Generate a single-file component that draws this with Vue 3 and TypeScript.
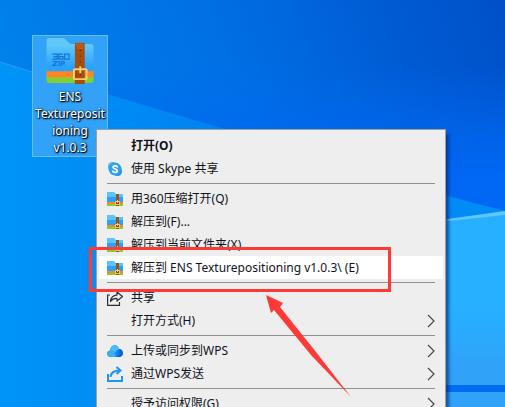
<script setup lang="ts">
type IconName = 'skype' | 'zip' | 'share' | 'cloud' | 'send'

interface MenuItem {
  label: string
  icon?: IconName
  primary?: boolean
  active?: boolean
  submenu?: boolean
}

const groups: MenuItem[][] = [
  [
    { label: '打开(O)', primary: true },
    { label: '使用 Skype 共享', icon: 'skype' },
  ],
  [
    { label: '用360压缩打开(Q)', icon: 'zip' },
    { label: '解压到(F)...', icon: 'zip' },
    { label: '解压到当前文件夹(X)', icon: 'zip' },
    { label: '解压到 ENS Texturepositioning v1.0.3\\ (E)', icon: 'zip', active: true },
  ],
  [
    { label: '共享', icon: 'share' },
    { label: '打开方式(H)', submenu: true },
  ],
  [
    { label: '上传或同步到WPS', icon: 'cloud', submenu: true },
    { label: '通过WPS发送', icon: 'send', submenu: true },
  ],
  [{ label: '授予访问权限(G)', submenu: true }],
]

const fileNameLines: string[] = ['ENS', 'Textureposit', 'ioning', 'v1.0.3']
</script>

<template>
  <main class="desktop">
    <svg class="wallpaper" viewBox="0 0 505 407" preserveAspectRatio="none" aria-hidden="true">
      <defs>
        <linearGradient id="sky" x1="0" y1="0.3" x2="1" y2="0">
          <stop offset="0" stop-color="#0083ec" />
          <stop offset="0.45" stop-color="#0070e4" />
          <stop offset="0.8" stop-color="#005ad2" />
          <stop offset="1" stop-color="#0050c8" />
        </linearGradient>
        <linearGradient id="deep" x1="0" y1="0" x2="0" y2="1">
          <stop offset="0.3" stop-color="#0068f4" stop-opacity="0" />
          <stop offset="0.8" stop-color="#0068f4" />
        </linearGradient>
        <linearGradient id="beam" x1="0" y1="0" x2="1" y2="0">
          <stop offset="0" stop-color="#0094f8" />
          <stop offset="1" stop-color="#0082f0" />
        </linearGradient>
        <linearGradient id="pane" x1="0" y1="0" x2="0" y2="1">
          <stop offset="0.5" stop-color="#26b0ff" />
          <stop offset="0.8" stop-color="#30a2f8" />
        </linearGradient>
      </defs>
      <rect width="505" height="407" fill="url(#sky)" />
      <rect width="505" height="220" fill="url(#deep)" />
      <path d="M0 62L110 95L228 130V407H0Z" fill="url(#beam)" />
      <path d="M0 62L32 72" stroke="#279fee" />
      <path d="M440 194L505 211V222H440Z" fill="#008bf6" />
      <path d="M440 220L505 212V407H440Z" fill="url(#pane)" />
      <path d="M440 220L505 211V215L440 222Z" fill="#60c6f8" />
      <rect x="440" y="385" width="65" height="7" fill="#006cf2" />
    </svg>

    <button class="file" type="button">
      <svg class="file-icon" viewBox="0 0 48 48" aria-hidden="true">
        <defs>
          <linearGradient id="folder" x1="0" y1="0" x2="0" y2="1">
            <stop offset="0.2" stop-color="#60c8fa" />
            <stop offset="0.8" stop-color="#28a2fc" />
          </linearGradient>
        </defs>
        <path d="M0 3Q0 0 3 0H17Q19 0 20 2L23 5Q24 6 26 6H45Q48 6 48 9V37H0Z" fill="url(#folder)" />
        <path d="M0 37H48V43Q48 46 45 46H3Q0 46 0 43Z" fill="#86ce30" />
        <path d="M0 32Q0 34 3 34H45Q48 34 48 32V37Q48 40 45 40H3Q0 40 0 37Z" fill="#ff8424" />
        <path d="M6 16.500H11V21.500H6M7 19H11M17 16.500H12.500V21.500H17V19H13M18.500 16.500H23V21.500H18.500Z" fill="none" stroke="#1474d8" stroke-width="1.200" />
        <path d="M6 24H11L6.500 28H11M13 23.500V28.500M15 28.500V24H18V26.500H15" fill="none" stroke="#1474d8" stroke-width="1.200" />
        <rect x="29" y="5" width="10" height="42" fill="#a84e0c" />
        <path d="M30 6.500H38M31 8.500H38M32 10.500H37" stroke="#ee8428" stroke-dasharray="1 1" />
        <path d="M34 12h1v1h-1zM34 18h1v1h-1zM34 24h1v1h-1zM34 37h1v1h-1z" fill="#321400" />
        <rect x="28" y="32" width="13" height="10" rx="1" fill="none" stroke="#ffce6c" stroke-width="2" />
        <path d="M34.500 29V36" stroke="#ffce6c" stroke-width="2" />
      </svg>
      <span class="file-name">
        <span v-for="line in fileNameLines" :key="line">{{ line }}</span>
      </span>
    </button>

    <div class="menu" role="menu">
      <div v-for="(group, index) in groups" :key="index" class="group" role="group">
        <button
          v-for="item in group"
          :key="item.label"
          type="button"
          role="menuitem"
          class="item"
          :class="{ primary: item.primary, active: item.active }"
        >
          <span class="slot">
            <svg v-if="item.icon === 'skype'" viewBox="0 0 16 16" aria-hidden="true">
              <circle cx="5.500" cy="5.500" r="4.500" fill="#48b8f4" />
              <circle cx="10.500" cy="10.500" r="4.500" fill="#1e90ec" />
              <circle cx="8" cy="8" r="6.500" fill="#2ca2f2" />
              <path d="M10.300 5.800C9.500 4.400 5.900 4.400 6 6.300C6.100 8.300 10.300 7.500 10.300 9.800C10.300 11.800 6.500 11.700 5.700 10.200" fill="none" stroke="#fff" stroke-width="1.700" stroke-linecap="round" />
            </svg>
            <svg v-else-if="item.icon === 'zip'" viewBox="0 0 16 16" aria-hidden="true">
              <path d="M0 1H7L9 3H16V12H0Z" fill="#5cc4fa" />
              <path d="M0 6H16V12H0Z" fill="#2aa2fa" />
              <path d="M0 13H16V15H0Z" fill="#86ce30" />
              <path d="M0 11H16V13H0Z" fill="#ff8424" />
              <path d="M9 3H12V15H9Z" fill="#a84e0c" />
              <path d="M8.500 10.500H12.500V13.500H8.500Z" fill="#8c3c08" stroke="#ffce6c" />
              <path d="M10.500 9V12" stroke="#ffce6c" />
            </svg>
            <svg v-else-if="item.icon === 'share'" viewBox="0 0 16 16" aria-hidden="true">
              <path d="M3 5H.600V15.400H12.500V12" fill="none" stroke="#2a2e38" stroke-width="1.200" />
              <path d="M10 2L15.500 6.500L10 11V8.500Q6 8 3.500 11.500Q4 5.500 10 4.800Z" fill="none" stroke="#2a2e38" stroke-width="1.200" stroke-linejoin="round" />
            </svg>
            <svg v-else-if="item.icon === 'cloud'" viewBox="0 0 16 16" aria-hidden="true">
              <path d="M4 14C-1 14-1 8 3 7.500C3.500 1 11 .500 12 6C17 6 17.500 14 12.500 14Z" fill="#1684ee" />
              <path d="M4 14C-1 14-1 8 3 7.500C6 7 8 9 9 14Z" fill="#38b0f4" />
              <path d="M3 7.500C3.500 1 11 .500 12 6Q9 7 8 10Q6 7 3 7.500Z" fill="#4cbcf6" />
              <path d="M12 6C17 6 17.500 14 12.500 14H9Q14 12 12 6Z" fill="#0866d2" />
            </svg>
            <svg v-else-if="item.icon === 'send'" viewBox="0 0 16 16" aria-hidden="true">
              <path d="M1 8V15H15V10" fill="none" stroke="#1e96f4" stroke-width="2" />
              <path d="M3.500 11Q4 4.500 13 4.500M9.500 1L13.500 4.500L9.500 8" fill="none" stroke="#1e96f4" stroke-width="2" />
            </svg>
          </span>
          <span class="label">{{ item.label }}</span>
          <svg v-if="item.submenu" class="chevron" viewBox="0 0 8 14" aria-hidden="true">
            <path d="M1 1L7 7L1 13" fill="none" stroke="#4a4644" stroke-width="1.200" />
          </svg>
        </button>
      </div>
    </div>

    <div class="highlight" aria-hidden="true"></div>
    <svg class="pointer" viewBox="0 0 85 103" aria-hidden="true">
      <path d="M0 0L17 8L14 12L50 57L85 102L45 60L8 15L5 18Z" fill="#ff3a36" />
    </svg>
  </main>
</template>

<style>
body {
  margin: 0;
}
</style>

<style scoped>
.desktop {
  position: relative;
  height: 100vh;
  overflow: hidden;
  font-family: "Noto Sans", "Noto Sans CJK SC", sans-serif;
  font-size: 12px;
}

.wallpaper {
  position: absolute;
  inset: 0;
  width: 100%;
  height: 100%;
}

button {
  font: inherit;
  margin: 0;
  border: 0;
}

.file {
  position: absolute;
  left: 32px;
  top: 35px;
  display: flex;
  flex-direction: column;
  align-items: center;
  gap: 3px;
  box-sizing: border-box;
  width: 76px;
  height: 122px;
  padding: 2px 0 0;
  border: 1px solid #60bdf8;
  background: #32a2f8;
  color: #fff;
}

.file-icon {
  width: 48px;
  height: 48px;
}

.file-name {
  display: flex;
  flex-direction: column;
  align-items: center;
  line-height: 17px;
  text-shadow: 1px 1px 1px #000, 0 1px 2px #002850, 1px 0 2px #002850;
}

.menu {
  position: absolute;
  left: 96px;
  right: 59px;
  top: 129px;
  padding: 4px 2px;
  border: 1px solid #a0a0a0;
  background: #eee;
  box-shadow: 4px 4px 3px -1px rgba(0, 40, 120, 0.65);
}

.group + .group::before {
  content: "";
  display: block;
  height: 1px;
  margin: 3px 8px;
  background: #919191;
}

.item {
  display: flex;
  align-items: center;
  gap: 8px;
  width: 100%;
  height: 23px;
  padding: 0 8px;
  background: transparent;
  color: #10121a;
  text-align: left;
  white-space: nowrap;
}

.item.primary {
  font-weight: 700;
}

.item.active {
  background: #fff;
}

.slot,
.slot svg {
  display: block;
  width: 16px;
  height: 16px;
}

.label {
  flex: 1;
  padding-bottom: 2px;
}

.chevron {
  width: 8px;
  height: 14px;
}

.highlight {
  position: absolute;
  left: 89px;
  top: 247px;
  box-sizing: border-box;
  width: 302px;
  height: 45px;
  border: 3px solid #ff3a36;
}

.pointer {
  position: absolute;
  left: 266px;
  top: 295px;
  width: 85px;
  height: 103px;
}
</style>
